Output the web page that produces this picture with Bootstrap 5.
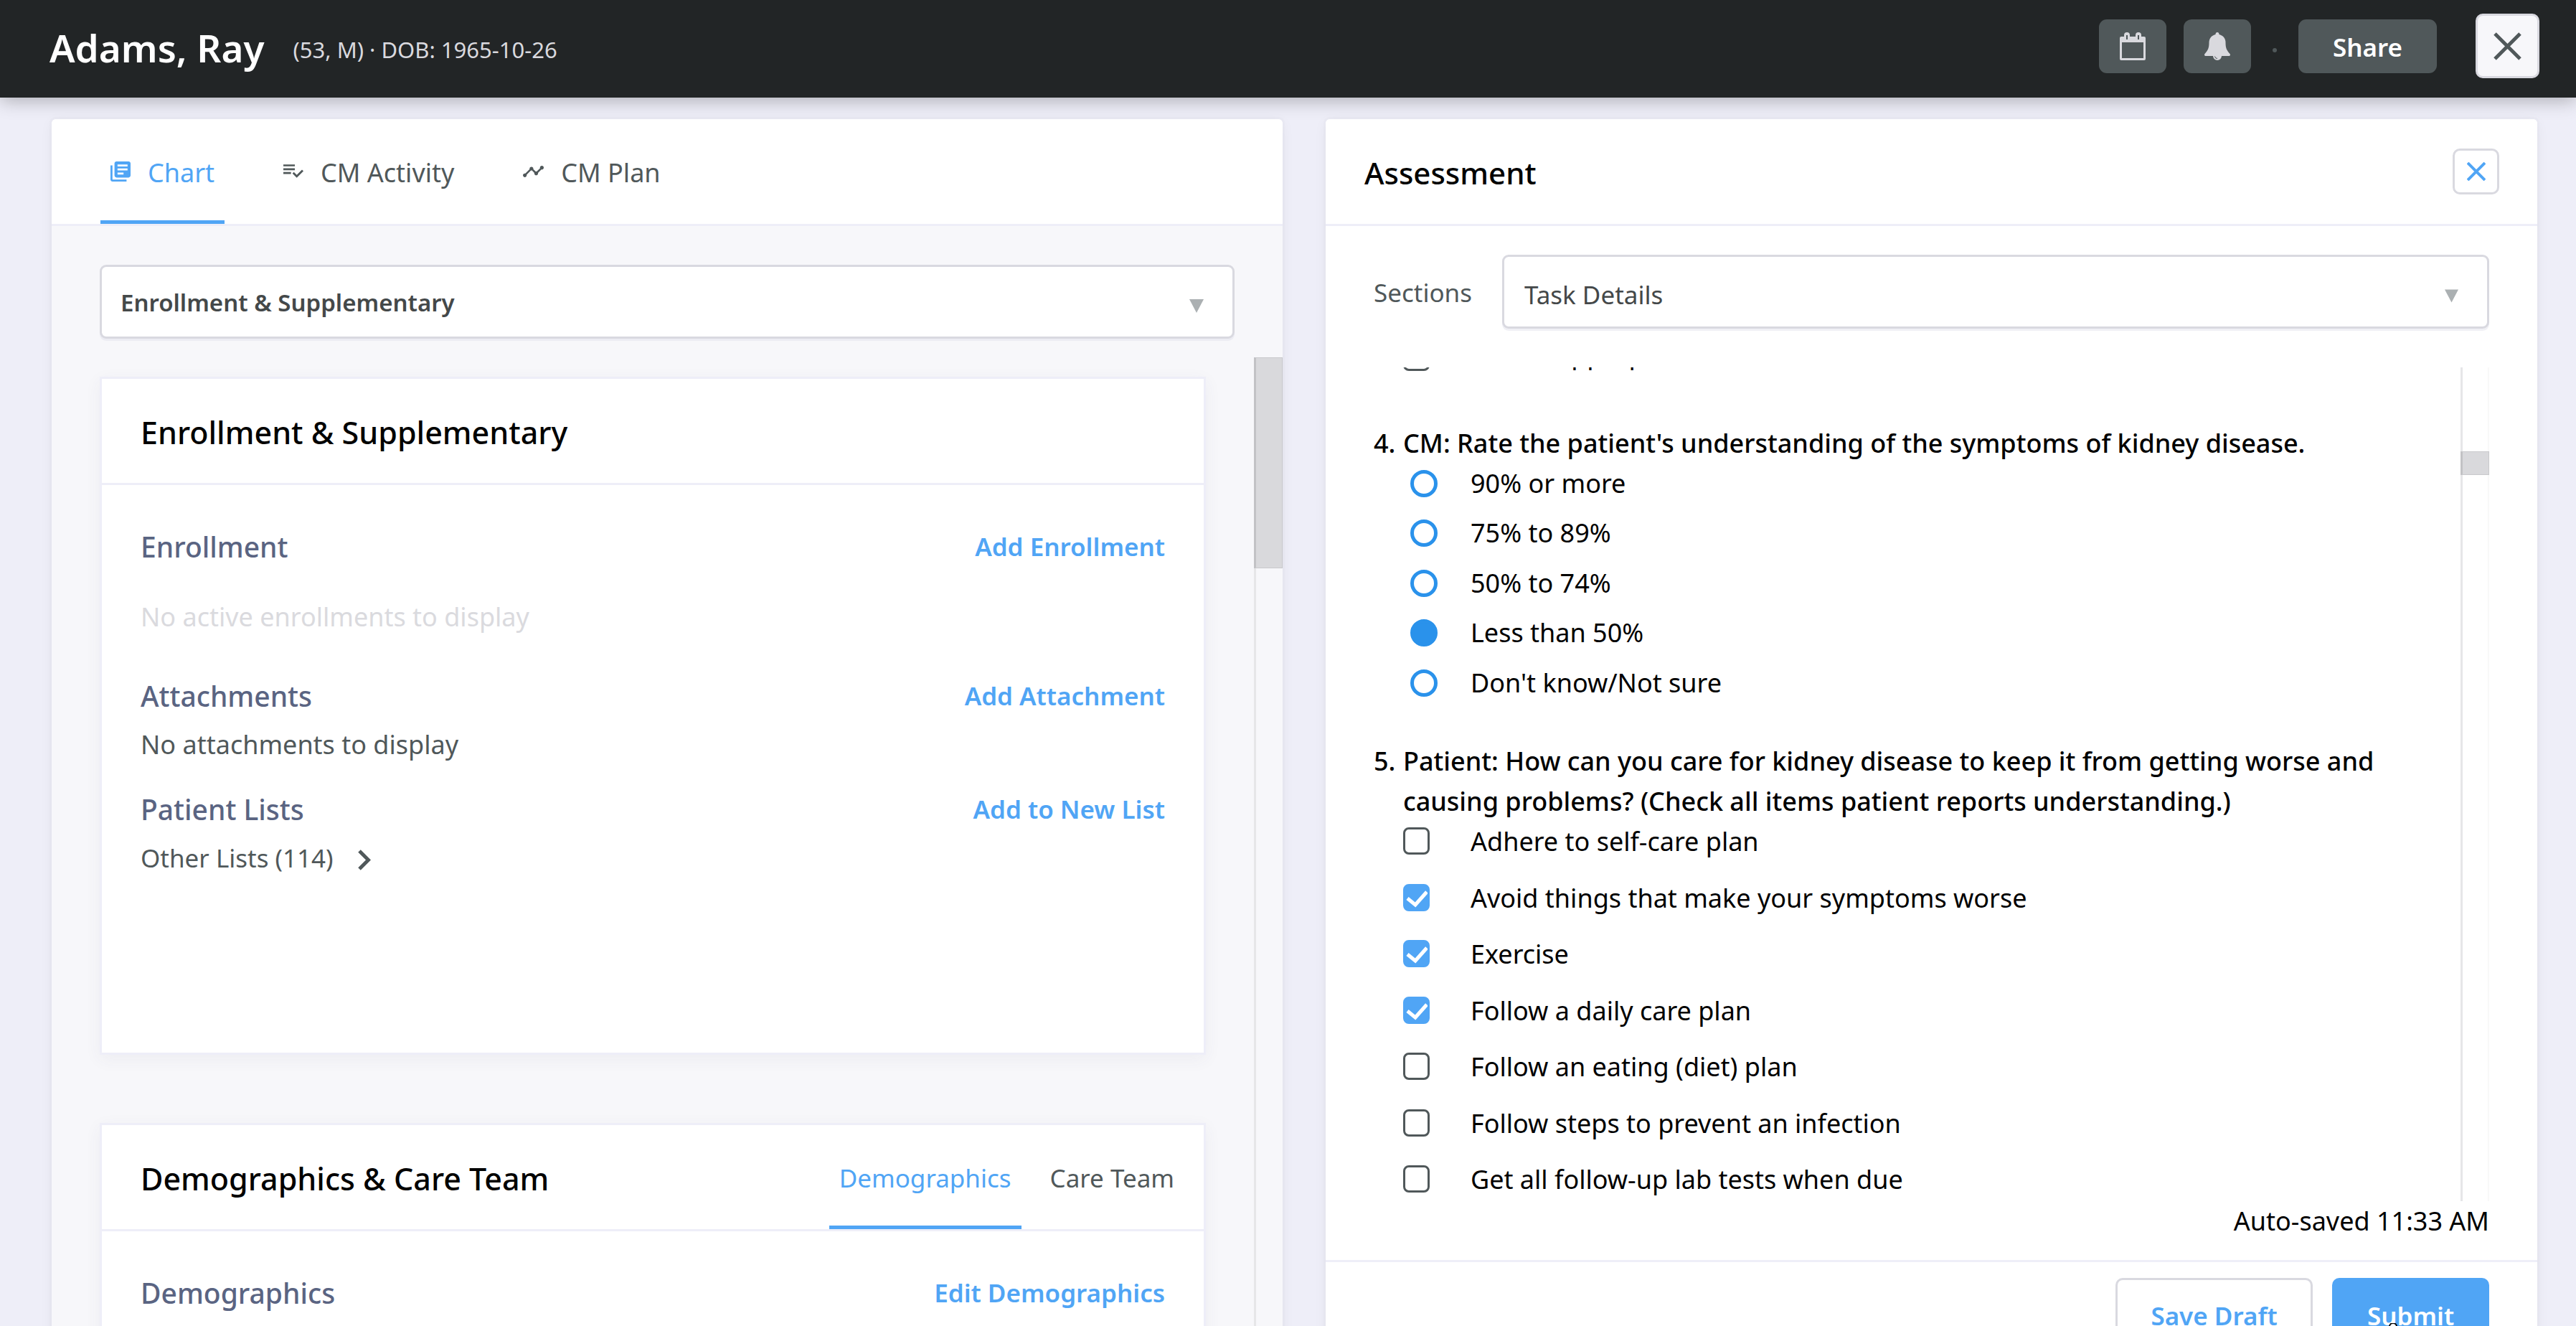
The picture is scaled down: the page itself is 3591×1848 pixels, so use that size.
<!DOCTYPE html>
<html lang="en">
<head>
<meta charset="utf-8">
<meta name="viewport" content="width=device-width, initial-scale=1">
<title>Adams, Ray – Assessment</title>
<link href="https://cdn.jsdelivr.net/npm/bootstrap@5.3.0/dist/css/bootstrap.min.css" rel="stylesheet">
<style>
  :root { --ink:#50585a; --blue:#50a5f5; --line:#eeeef8; --edge:#d9d9e0; --slate:#5a6482; }
  html, body { height:100%; overflow:hidden; }
  body { background:#eeeef8; color:#000; font-family:"Noto Sans","Open Sans",sans-serif; font-size:36px; line-height:56px; }
  .shell { height:calc(100vh + 62px); }
  a { color:var(--blue); text-decoration:none; }
  .act { font-size:35px; font-weight:600; }

  .topbar { background:#222526; height:136px; padding:0 51px 8px 69px; box-shadow:0 4px 24px rgba(0,0,0,.28); z-index:2; }
  .patient { color:#fff; font-size:53px; font-weight:600; line-height:72px; padding-top:6px; }
  .patient-meta { color:#d9d9de; font-size:31px; line-height:48px; margin-left:40px; padding-top:10px; }
  .bar-btn { background:var(--ink); color:#fff; border:0; border-radius:11px; height:75px; min-width:94px; padding:0; font-size:35px; }
  .bar-btn:hover { background:#5c6567; color:#fff; }
  .share-btn { width:193px; padding-top:5px; font-weight:600; }
  .sep-dot { width:6px; height:6px; border-radius:50%; background:var(--ink); margin:12px 30px 0; }
  .close-lg { width:89px; height:90px; background:#f7f7fa; border:3px solid var(--edge); border-radius:10px; margin-left:54px; padding:0; color:var(--ink); }

  .work { padding:30px 54px 0 72px; gap:60px; min-height:0; }
  .panel { background:#fff; border-radius:6px; min-width:0; box-shadow:0 3px 18px rgba(0,0,0,.05), 0 0 0 3px rgba(232,232,242,.5); }
  .panel-chart { flex:1716 1 0; background:#f7f7fa; }
  .panel-form { flex:1689 1 0; }
  .panel-head { height:149px; border-bottom:3px solid var(--line); background:#fff; border-radius:6px 6px 0 0; flex:none; }
  .title-md { font-size:43px; line-height:60px; margin:0; padding-top:4px; font-weight:500; }
  .panel-head .title-md { font-size:42px; }

  .tabs { height:100%; }
  .tab-item { color:var(--ink); padding:7px 14px 0; border-bottom:5px solid transparent; font-size:35px; display:flex; align-items:center; }
  .tab-item svg { margin:-5px 24px 0 0; }
  .tab-item.active { color:var(--blue); border-bottom-color:var(--blue); }
  .tabs-main { gap:68px; }
  .tabs-main .tab-item { font-size:36px; padding-top:9px; }
  .tabs-sub { gap:26px; }

  .pick { position:relative; }
  .pick .form-select { height:103px; border:3px solid var(--edge); border-radius:9px; background:#fff; color:#444849; font-size:35px; padding:4px 70px 0 28px; box-shadow:0 3px 0 rgba(225,225,236,.5); }
  .pick svg { position:absolute; right:43px; top:48px; pointer-events:none; }
  .pick .pick-strong { font-size:33px; font-weight:600; padding:2px 70px 0 26px; }

  .track { width:40px; border-left:3px solid #e6e6e8; flex:none; }
  .thumb { background:#d9d9dc; border:1px solid #c9c9cc; border-left:3px solid #c2c2c5; margin-left:-3px; }
  .block { background:#fff; border:3px solid var(--line); box-shadow:0 6px 22px rgba(60,60,110,.06); }
  .block-head { height:148px; border-bottom:3px solid var(--line); padding-left:54px; padding-right:27px; }
  .block-body { padding:56px 54px; }
  .sub-h { color:var(--slate); font-size:39px; line-height:60px; font-weight:500; margin:0; }
  .txt { color:var(--ink); line-height:60px; margin:0; }
  .txt-faint { color:#dadade; }

  .small-x { width:65px; height:64px; border:3px solid var(--edge); border-radius:10px; background:#fff; color:var(--blue); padding:0; }
  .quiz { overflow:hidden; min-height:0; }
  .question { display:flex; font-weight:500; margin:40px 0 0; padding-right:27px; font-size:36px; line-height:56px; }
  .question span:first-child { flex:0 0 41px; }
  .opts { display:grid; padding-left:41px; }
  .opts-radio { grid-auto-rows:69px 70px; }
  .opts-check { grid-auto-rows:79px 78px; }
  .opt { display:flex; align-items:flex-start; }
  .opt .form-check-input { flex:none; width:37px; height:38px; margin:8px 57px 0 0; border:3px solid var(--ink); border-radius:8px; }
  .opt .form-check-input:checked { background-color:var(--blue); border-color:var(--blue); background-origin:border-box; background-size:100% 100%;
    background-image:url("data:image/svg+xml,%3csvg xmlns='http://www.w3.org/2000/svg' viewBox='0 0 37 38'%3e%3cpath d='M6 20 17 29 33 11' fill='none' stroke='%23fff' stroke-width='5'/%3e%3c/svg%3e"); }
  .opt .form-check-input[type=radio] { width:38px; margin:9px 46px 0 10px; border:5px solid #2a92eb; border-radius:50%; }
  .opt .form-check-input[type=radio]:checked { background:#2a92eb; border-color:#2a92eb; }
  /* last row of the previous question, scrolled almost out of view */
  .opts-cut { margin-top:-46px; grid-auto-rows:84px; }
  .opts-cut .opt .form-check-input { margin-top:13px; }

  .foot { border-top:3px solid var(--line); padding:22px 67px 23px; }
  .foot .btn { height:106px; border-radius:10px; font-size:35px; font-weight:600; }
  .btn-draft { width:275px; border:3px solid var(--edge); color:var(--blue); background:#fff; }
  .btn-send { width:219px; background:var(--blue); color:#fff; position:relative; }
  .btn-send svg { position:absolute; left:78px; top:62px; }
</style>
</head>
<body>
<div class="shell d-flex flex-column">
  <header class="topbar d-flex align-items-center flex-shrink-0 position-relative">
    <h1 class="patient m-0">Adams, Ray</h1>
    <span class="patient-meta">(53, M) · DOB: 1965-10-26</span>
    <div class="d-flex align-items-center ms-auto">
      <button class="btn bar-btn d-flex align-items-center justify-content-center me-4" type="button" aria-label="Calendar">
        <svg width="36" height="39" viewBox="0 0 36 39"><path fill="#d9d9de" fill-rule="evenodd" d="M2 6H6V4a4 4 0 0 1 8 0V6h8V4a4 4 0 0 1 8 0V6h4a2 2 0 0 1 2 2V37a2 2 0 0 1-2 2H2a2 2 0 0 1-2-2V8A2 2 0 0 1 2 6ZM3 14V36H33V14ZM9 4v6h2V4ZM25 4v6h2V4Z"/></svg>
      </button>
      <button class="btn bar-btn d-flex align-items-center justify-content-center" type="button" aria-label="Notifications">
        <svg width="36" height="39" viewBox="0 0 36 39"><path fill="#d9d9de" d="M18 0c1.500 0 2.500 1 2.500 3 6 1.500 9 6 9 11 0 8 1.500 11 6 16 1 1.500.500 3-1.500 3H24a6 6 0 0 1-12 0H2C0 33-.500 31.500.500 30c4.500-5 6-8 6-16 0-5 3-9.500 9-11 0-2 1-3 2.500-3Z"/><path d="M14.500 33.500a3.500 3.500 0 0 0 3.500 3" fill="none" stroke="#50585a"/></svg>
      </button>
      <span class="sep-dot"></span>
      <button class="btn bar-btn share-btn" type="button">Share</button>
      <button class="btn close-lg d-flex align-items-center justify-content-center" type="button" aria-label="Close chart">
        <svg width="39" height="39" viewBox="0 0 39 39" stroke="currentColor" stroke-width="5"><path d="M2 2 37 37M37 2 2 37"/></svg>
      </button>
    </div>
  </header>

  <main class="work d-flex flex-grow-1">
    <section class="panel panel-chart d-flex flex-column">
      <div class="panel-head" style="padding-left:68px">
        <nav class="tabs tabs-main d-flex">
          <a class="tab-item active" href="#chart"><svg width="28" height="28" viewBox="2 2 20 20" fill="currentColor"><path d="M4 6H2v14c0 1.100.9 2 2 2h14v-2H4V6zm16-4H8c-1.100 0-2 .9-2 2v12c0 1.100.9 2 2 2h12c1.100 0 2-.9 2-2V4c0-1.100-.9-2-2-2zm-1 9H9V9h10v2zm-4 4H9v-2h6v2zm4-8H9V5h10v2z"/></svg>Chart</a>
          <a class="tab-item" href="#activity"><svg width="28" height="19" viewBox="2 6 21 14" fill="currentColor"><path d="M14 10H2v2h12v-2zm0-4H2v2h12V6zM2 16h8v-2H2v2zm19.500-4.500L23 13l-6.990 7-4.510-4.500L13 14l3.010 3 5.490-5.500z"/></svg>CM Activity</a>
          <a class="tab-item" href="#plan"><svg width="29" height="16" viewBox="1 6 22 12" fill="currentColor"><path d="M23 8c0 1.100-.9 2-2 2-.18 0-.35-.02-.51-.07l-3.560 3.550c.05.16.07.34.07.52 0 1.100-.9 2-2 2s-2-.9-2-2c0-.18.02-.36.07-.52l-2.550-2.550c-.16.05-.34.07-.52.07s-.36-.02-.52-.07l-4.550 4.560c.05.16.07.33.07.51 0 1.100-.9 2-2 2s-2-.9-2-2 .9-2 2-2c.18 0 .35.02.51.07l4.560-4.550C8.020 9.360 8 9.180 8 9c0-1.100.9-2 2-2s2 .9 2 2c0 .18-.02.36-.07.52l2.550 2.550c.16-.05.34-.07.52-.07s.36.02.52.07l3.550-3.560C19.020 8.350 19 8.180 19 8c0-1.100.9-2 2-2s2 .9 2 2z"/></svg>CM Plan</a>
        </nav>
      </div>

      <div class="pick" style="margin:54px 67px 26px">
        <select class="form-select pick-strong" aria-label="Chart section"><option>Enrollment &amp; Supplementary</option></select>
        <svg width="20" height="19" viewBox="0 0 20 19"><path fill="#abb0b2" d="M0 0H20L10 19Z"/></svg>
      </div>

      <div class="d-flex flex-grow-1 overflow-hidden">
        <div class="flex-grow-1 overflow-hidden" style="padding:27px 67px 0">
          <article class="block" style="min-height:945px">
            <div class="block-head d-flex align-items-center"><h2 class="title-md">Enrollment &amp; Supplementary</h2></div>
            <div class="block-body">
              <div class="d-flex justify-content-between align-items-center">
                <h3 class="sub-h">Enrollment</h3><a class="act" href="#add-enrollment">Add Enrollment</a>
              </div>
              <p class="txt txt-faint" style="margin:38px 0 50px">No active enrollments to display</p>
              <div class="d-flex justify-content-between align-items-center">
                <h3 class="sub-h">Attachments</h3><a class="act" href="#add-attachment">Add Attachment</a>
              </div>
              <p class="txt" style="margin:8px 0 30px">No attachments to display</p>
              <div class="d-flex justify-content-between align-items-center">
                <h3 class="sub-h">Patient Lists</h3><a class="act" href="#add-list">Add to New List</a>
              </div>
              <a class="txt d-flex align-items-center mt-2" style="font-size:35px" href="#other-lists">Other Lists (114)
                <svg class="mt-1" style="margin-left:34px" width="18" height="29" viewBox="0 0 18 29"><path d="M2 2 14.500 14.500 2 27" fill="none" stroke="#50585a" stroke-width="5"/></svg>
              </a>
            </div>
          </article>

          <article class="block" style="margin-top:95px">
            <div class="block-head d-flex justify-content-between align-items-center">
              <h2 class="title-md">Demographics &amp; Care Team</h2>
              <nav class="tabs tabs-sub d-flex">
                <a class="tab-item active" href="#demographics">Demographics</a>
                <a class="tab-item" href="#care-team">Care Team</a>
              </nav>
            </div>
            <div class="block-body">
              <div class="d-flex justify-content-between align-items-center">
                <h3 class="sub-h">Demographics</h3><a class="act" href="#edit-demographics">Edit Demographics</a>
              </div>
            </div>
          </article>
        </div>
        <div class="track"><div class="thumb" style="height:294px"></div></div>
      </div>
    </section>

    <section class="panel panel-form d-flex flex-column">
      <div class="panel-head d-flex justify-content-between align-items-center" style="padding:0 53px 0 54px">
        <h2 class="title-md">Assessment</h2>
        <button class="btn small-x d-flex align-items-center justify-content-center" type="button" aria-label="Close assessment">
          <svg width="26" height="26" viewBox="0 0 26 26" stroke="currentColor" stroke-width="4"><path d="M1 1 25 25M25 1 1 25"/></svg>
        </button>
      </div>

      <form class="d-flex flex-column flex-grow-1" style="min-height:0">
        <div class="d-flex flex-column flex-grow-1" style="padding:40px 67px 26px 67px;min-height:0">
          <div class="d-flex align-items-center">
            <label class="txt" for="sections" style="font-size:35px;width:179px;padding-top:3px">Sections</label>
            <div class="pick flex-grow-1">
              <select class="form-select" id="sections" style="padding-top:10px"><option>Task Details</option></select>
              <svg width="19" height="19" viewBox="0 0 20 19"><path fill="#abb0b2" d="M0 0H20L10 19Z"/></svg>
            </div>
          </div>

          <div class="d-flex flex-grow-1 quiz" style="margin-top:54px">
            <div class="flex-grow-1 overflow-hidden">
              <div class="opts opts-cut">
                <label class="opt"><input class="form-check-input" type="checkbox">Use as appropriate</label>
              </div>

              <p class="question"><span>4.</span><span>CM: Rate the patient's understanding of the symptoms of kidney disease.</span></p>
              <div class="opts opts-radio">
                <label class="opt"><input class="form-check-input" type="radio" name="q4">90% or more</label>
                <label class="opt"><input class="form-check-input" type="radio" name="q4">75% to 89%</label>
                <label class="opt"><input class="form-check-input" type="radio" name="q4">50% to 74%</label>
                <label class="opt"><input class="form-check-input" type="radio" name="q4" checked>Less than 50%</label>
                <label class="opt"><input class="form-check-input" type="radio" name="q4">Don't know/Not sure</label>
              </div>

              <p class="question"><span>5.</span><span>Patient: How can you care for kidney disease to keep it from getting worse and causing problems? (Check all items patient reports understanding.)</span></p>
              <div class="opts opts-check">
                <label class="opt"><input class="form-check-input" type="checkbox">Adhere to self-care plan</label>
                <label class="opt"><input class="form-check-input" type="checkbox" checked>Avoid things that make your symptoms worse</label>
                <label class="opt"><input class="form-check-input" type="checkbox" checked>Exercise</label>
                <label class="opt"><input class="form-check-input" type="checkbox" checked>Follow a daily care plan</label>
                <label class="opt"><input class="form-check-input" type="checkbox">Follow an eating (diet) plan</label>
                <label class="opt"><input class="form-check-input" type="checkbox">Follow steps to prevent an infection</label>
                <label class="opt"><input class="form-check-input" type="checkbox">Get all follow-up lab tests when due</label>
              </div>
            </div>
            <div class="track" style="border-right:2px solid #f8f8f8"><div class="thumb" style="height:33px;margin-top:117px;margin-right:-2px"></div></div>
          </div>
          <div class="text-end">Auto-saved 11:33 AM</div>
        </div>

        <div class="foot d-flex justify-content-end">
          <button class="btn btn-draft" type="button" style="margin-right:27px">Save Draft</button>
          <button class="btn btn-send" type="submit">Submit
            <svg width="12" height="20" viewBox="0 0 12 20"><path d="M1 20V5a5 5 0 0 1 10 0V20Z" fill="#fff" stroke="#000" stroke-width="2"/></svg>
          </button>
        </div>
      </form>
    </section>
  </main>
</div>
<script src="https://cdn.jsdelivr.net/npm/bootstrap@5.3.0/dist/js/bootstrap.bundle.min.js"></script>
</body>
</html>
